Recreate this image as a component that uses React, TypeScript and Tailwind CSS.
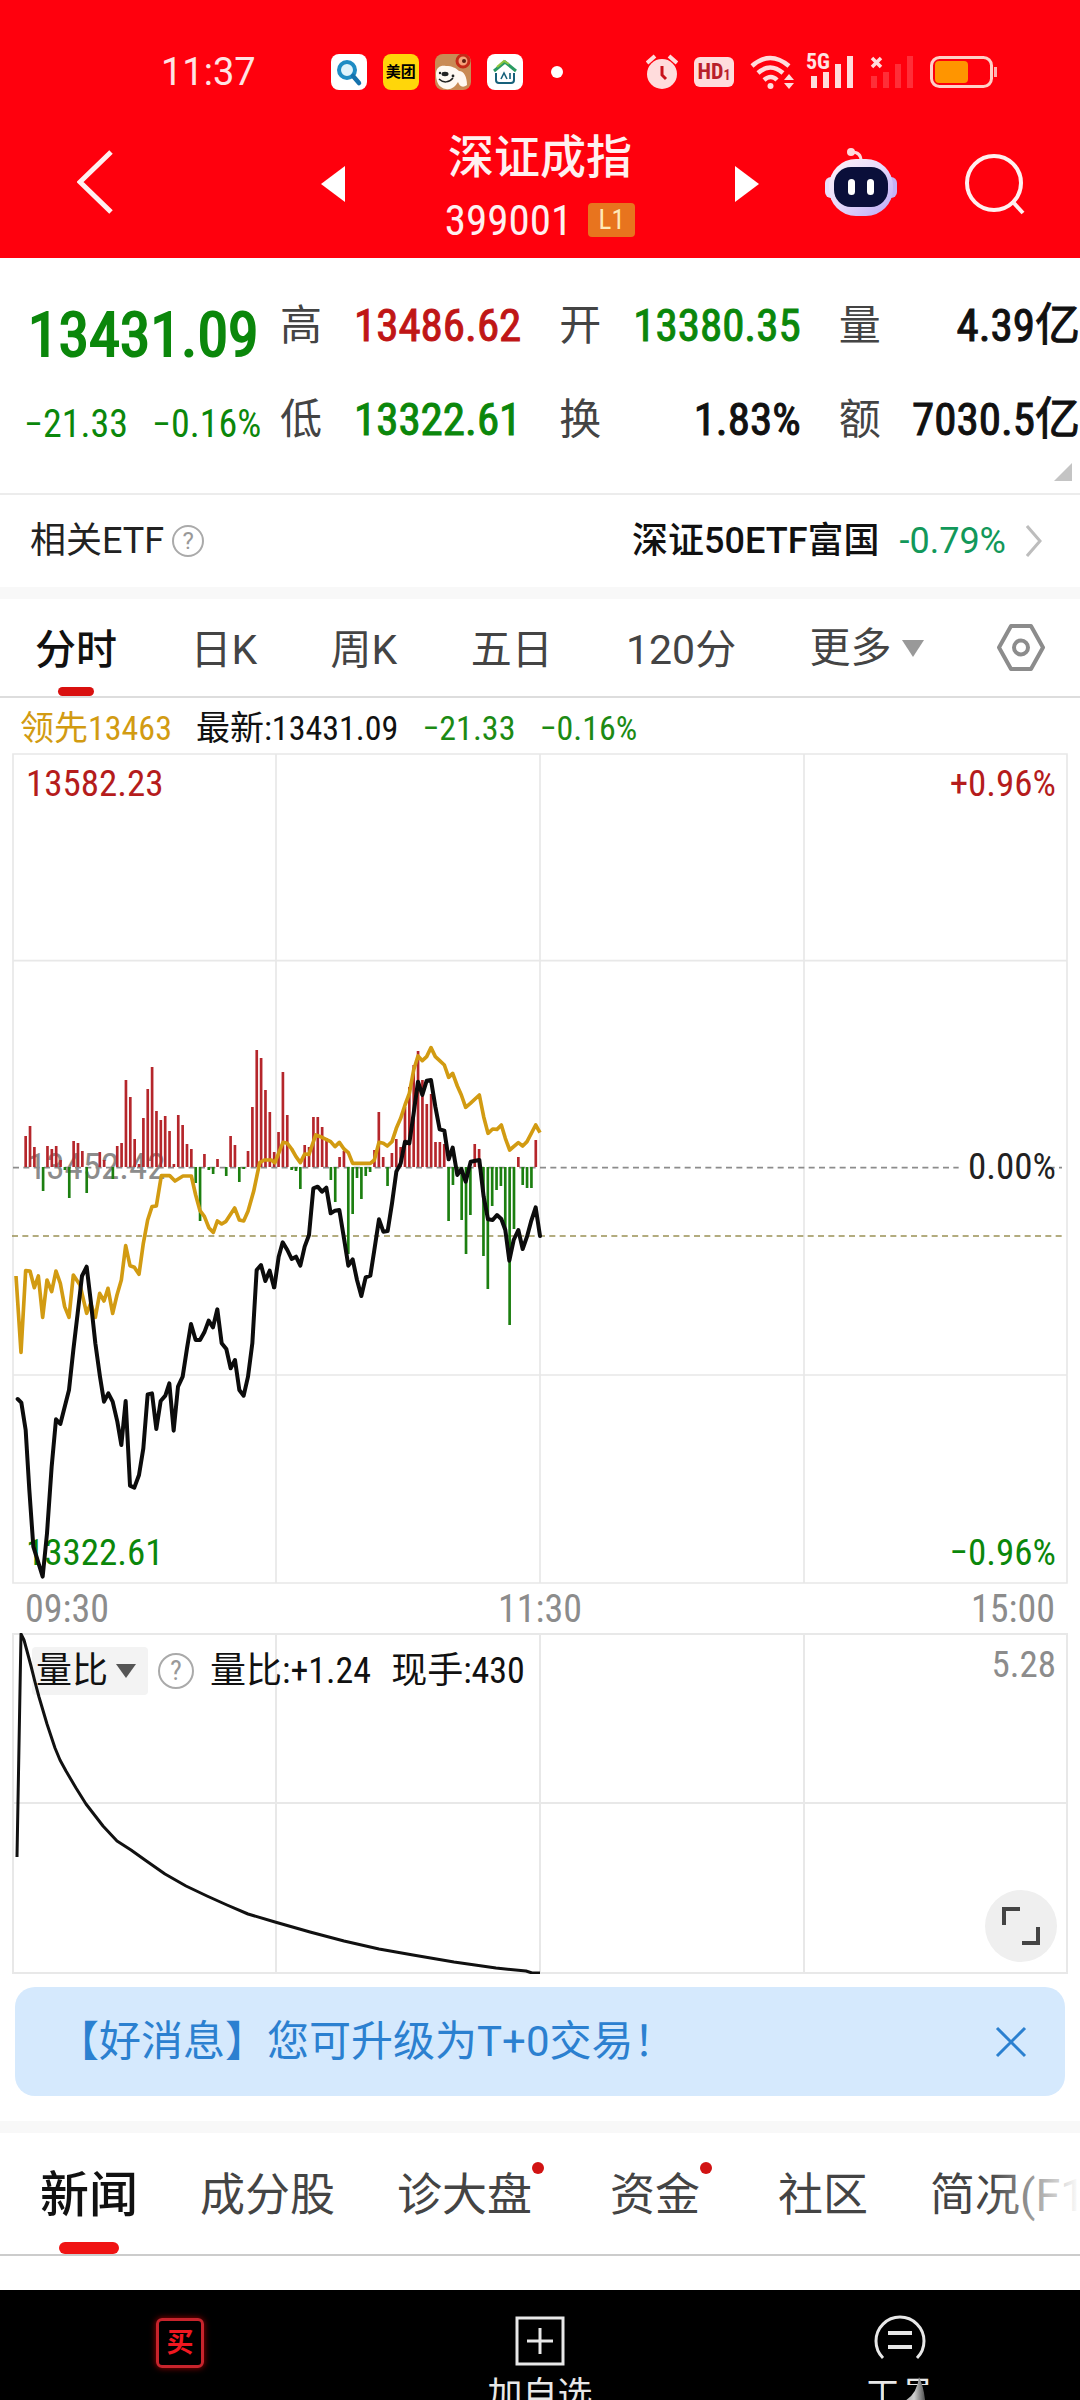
import { useState } from "react";

interface Quote {
    label: string;
    value: string;
    color: string;
}

interface NewsTab {
    label: string;
    dot?: boolean;
}

const quotes: Quote[] = [
    { label: "高", value: "13486.62", color: "text-[#c01616]" },
    { label: "开", value: "13380.35", color: "text-[#0b870b]" },
    { label: "量", value: "4.39亿", color: "text-[#111111]" },
    { label: "低", value: "13322.61", color: "text-[#0b870b]" },
    { label: "换", value: "1.83%", color: "text-[#111111]" },
    { label: "额", value: "7030.5亿", color: "text-[#111111]" },
];

const periods = ["分时", "日K", "周K", "五日", "120分"];

const newsTabs: NewsTab[] = [
    { label: "新闻" },
    { label: "成分股" },
    { label: "诊大盘", dot: true },
    { label: "资金", dot: true },
    { label: "社区" },
    { label: "简况(F10)" },
];

// signed bar heights per minute, starting at minute 6
const strength = [
    31, 41, 20, 0, -24, 21, 18, 21, 7, -3, -31, 26, 24, 16, -26, 0, 0, 15, 7, 0, -12, 21, 24, 87, 70, 28, 3, 49, 78,
    100, 56, 47, 51, 36, 3, 52, 42, 23, 18, -16, -54, 13, -3, -7, 8, 0, -9, 31, 22, -15, -2, 16, 60, 117, 109, 77, 55,
    15, 35, 95, 52, -3, -4, -22, 22, 20, 50, 50, 40, 29, -13, -35, 10, 16, -87, -47, -11, -32, -9, -5, 17, 55, 10, -19,
    14, 28, 20, 60, 80, 102, 116, 87, 63, 73, 25, 25, 23, -54, -18, -5, -53, -87, -48, 23, 18, -89, -122, -39, -23,
    -19, -66, -158, -62, 10, -18, -21, -21, 27,
];

const priceEarly =
    "53,597 64,608 77,690 88,870 100,1040 112,1078 128,1130 141,1000 155,800 168,658 181,672 207,570 220,450 233,340 246,228 260,200 273,310 286,430 300,530 312,605 325,580 338,605 352,665 364,735 377,603 390,857 403,863 417,825 430,745 443,583 456,580 469,687 482,603 496,587 508,550 521,692 534,560 548,530 561,445 573,372 587,420 600,420 613,397 626,362 639,382 652,328 665,430 679,447 692,505 705,480 718,570 731,587 744,530 757,430 770,210 783,195 796,243 809,212 822,262";
const priceLate =
    "13,862 26,770 38,727 52,750 65,777 78,770 91,797 104,740 117,705 130,565 143,560 156,575 169,563 182,640 195,632 208,630 222,715 235,797 248,778 261,840 274,888 287,832 301,827 313,750 327,658 340,695 353,693 366,610 379,515 392,490 405,425 418,430 431,340 444,245 457,285 470,242 483,240 496,320 509,388 523,392 536,478 548,443 562,525 574,507 587,545 602,485 628,480 641,590 654,658 668,660 681,645 694,657 706,690 718,782 731,720 745,690 758,747 771,710 783,665 797,622 810,708";
const leadEarly =
    "48,228 63,457 77,212 90,213 103,263 115,228 128,352 141,240 155,275 168,213 181,250 194,320 207,352 220,225 240,255 260,340 272,310 286,352 299,280 312,303 324,265 338,340 351,285 364,240 377,137 390,197 403,202 417,223 430,130 443,60 456,20 469,18 484,-73 509,-73 525,-57 549,-72 574,-72 587,-15 600,32 613,49 627,84 640,97 652,63 665,72 678,64 704,24 718,60 731,63 744,34 761,-26 779,-112 793,-120 814,-120 827,-110";
const leadLate =
    "13,492 39,427 52,430 65,447 78,470 91,488 104,462 117,463 137,405 156,412 182,425 195,440 208,427 222,447 235,458 248,490 301,490 313,480 327,427 340,430 352,438 366,425 379,385 392,355 405,315 418,280 431,210 444,168 457,182 470,170 483,143 496,170 509,182 523,195 536,232 548,220 562,258 574,285 587,322 601,310 628,285 641,350 654,400 668,387 681,388 694,375 706,415 719,450 745,428 758,438 771,425 797,375 810,398";
const ratio =
    "5,224 9,1 12,7 15,18 19,33 23,49 27,64 35,91 43,115 48,127 54,138 64,155 74,171 91,193 105,208 119,217 133,227 153,241 174,253 195,263 215,272 236,281 263,289 298,299 332,308 367,316 401,322 442,329 484,335 514,338 520,340 528,340";

function StatusBar() {
    return (
        <div className="flex h-[110px] items-end pr-[82px] pb-[18px] pl-[161px] text-[#ffe3e3]">
            <span className="mr-[75px] flex h-10 items-center font-['Roboto',sans-serif] text-[38px] leading-10">11:37</span>
            <div className="flex h-10 items-center gap-4">
                <svg className="size-9" viewBox="0 0 36 36" aria-hidden="true">
                    <rect width="36" height="36" rx="8" fill="#fff" />
                    <circle cx="16" cy="16" r="8" fill="#dff3fb" stroke="#1e8cc4" strokeWidth="4" />
                    <path d="M22 22l6 7" stroke="#1572ad" strokeWidth="4.5" strokeLinecap="round" />
                </svg>
                <span className="flex size-9 items-center justify-center rounded-lg bg-[#ffd60a] text-[15px] leading-5 font-bold text-black">
                    美团
                </span>
                <svg className="size-9" viewBox="0 0 36 36" aria-hidden="true">
                    <rect width="36" height="36" rx="8" fill="#c98a55" />
                    <path d="M1 20C1 13 6 11 11 12c6 0 10 2 13 5 5 0 8 6 8 14-5 4-8 0-9-3-3 5-7 8-12 7C4 34 1 28 1 20z" fill="#fff8f2" />
                    <path d="M4 25c4 4 10 4 14-1" fill="none" stroke="#222" strokeWidth="1.5" />
                    <ellipse cx="10" cy="20" rx="3.5" ry="2.2" fill="#222" />
                    <circle cx="5" cy="19" r="1.2" fill="#222" />
                    <circle cx="18" cy="22" r="1.4" fill="#222" />
                    <circle cx="28" cy="7" r="6" fill="#f6a27a" stroke="#c52a18" strokeWidth="3" />
                    <circle cx="29" cy="7" r="2" fill="#5b1d10" />
                </svg>
                <svg className="size-9" viewBox="0 0 36 36" aria-hidden="true">
                    <rect width="36" height="36" rx="8" fill="#fff" />
                    <path d="M7 17L18 8l11 9" fill="none" stroke="#2a9b62" strokeWidth="3" />
                    <path d="M10 13l7-6 5 3" fill="none" stroke="#8ec63f" strokeWidth="2" />
                    <path d="M9 19v7q0 3 3 3h12q3 0 3-3v-7" fill="none" stroke="#16607a" strokeWidth="2" />
                    <path d="M14 25l3-6 3 6M23 19v6" fill="none" stroke="#16607a" strokeWidth="1.6" />
                </svg>
            </div>
            <span className="mb-[14px] ml-[28px] size-3 rounded-full bg-white" />
            <div className="ml-auto flex h-10 items-center gap-4">
                <svg className="h-9 w-8" viewBox="0 0 32 36" aria-hidden="true">
                    <circle cx="16" cy="20" r="15" fill="#ffdcdc" />
                    <path d="M16 12v9l4 4" fill="none" stroke="#c8101a" strokeWidth="3" />
                    <path d="M1 9l8-7M31 9l-8-7" stroke="#ffdcdc" strokeWidth="4" />
                </svg>
                <span className="flex h-[30px] w-10 items-center justify-center rounded-md bg-[#ffdcdc] text-[22px] leading-6 font-bold text-[#b8202a]">
                    HD<small className="pt-1.5 text-sm leading-4">1</small>
                </span>
                <svg className="h-9 w-11" viewBox="0 0 44 36" aria-hidden="true" fill="none" stroke="#ffdcdc" strokeWidth="4.5">
                    <path d="M2 12q18-16 37 0M8 19q12-11 25 0M14 26q7-6 13 0" />
                    <circle cx="20.500" cy="32" r="3" fill="#ffdcdc" stroke="none" />
                    <path d="M34 26l5-6 5 6zM34 29l5 6 5-6z" fill="#ffdcdc" stroke="none" />
                </svg>
                <div className="relative">
                    <span className="absolute -top-1 -left-1 text-[22px] leading-5 font-bold">5G</span>
                    <svg className="h-8 w-11" viewBox="0 0 44 32" aria-hidden="true" fill="#ffdcdc">
                        <path d="M1 20h6v12H1zM13 16h6v16h-6zM25 8h6v24h-6zM37 0h6v32h-6z" />
                    </svg>
                </div>
                <svg className="h-8 w-11" viewBox="0 0 44 32" aria-hidden="true">
                    <path d="M1 20h6v12H1zM13 16h6v16h-6zM25 8h6v24h-6zM37 0h6v32h-6z" fill="#ff2e38" />
                    <path d="M2 2l9 9M11 2l-9 9" stroke="#ffdcdc" strokeWidth="3.500" />
                </svg>
                <svg className="h-8 w-[68px]" viewBox="0 0 68 32" aria-hidden="true">
                    <rect x="1.500" y="1.500" width="60" height="29" rx="8" fill="none" stroke="#ffd0c8" strokeWidth="3" />
                    <rect x="5" y="5" width="33" height="22" rx="4" fill="#ff9500" />
                    <path d="M65.500 11v10" stroke="#ffb0b0" strokeWidth="3" />
                </svg>
            </div>
        </div>
    );
}

function TitleBar() {
    return (
        <div className="grid h-[148px] grid-cols-[1fr_438px_1fr] items-center px-[54px] text-[#fff0f0]">
            <button type="button" aria-label="返回" className="ml-[23px] justify-self-start pb-1">
                <svg className="h-16 w-9" viewBox="0 0 36 64" fill="none" stroke="currentColor" strokeWidth="5">
                    <path d="M34 2L3 32l31 30" />
                </svg>
            </button>
            <div className="flex items-center justify-between">
                <button type="button" aria-label="上一只">
                    <svg className="h-9 w-6" viewBox="0 0 24 36" fill="#fff">
                        <path d="M24 0v36L0 18z" />
                    </svg>
                </button>
                <div className="flex flex-col items-center pt-1.5">
                    <h1 className="text-[46px] leading-[66px] font-medium">深证成指</h1>
                    <div className="flex items-center gap-4">
                        <span className="text-[43px] leading-[60px]">399001</span>
                        <span className="flex h-[34px] w-[47px] items-center justify-center rounded-sm bg-[#e8741e] text-[27px] leading-8 text-[#ffe9b8]">
                            L1
                        </span>
                    </div>
                </div>
                <button type="button" aria-label="下一只">
                    <svg className="h-9 w-6" viewBox="0 0 24 36" fill="#fff">
                        <path d="M0 0v36l24-18z" />
                    </svg>
                </button>
            </div>
            <div className="flex items-center gap-[68px] justify-self-end">
                <button type="button" aria-label="智能助手" className="pb-1">
                    <svg className="h-[68px] w-[72px]" viewBox="0 0 72 68">
                        <defs>
                            <linearGradient id="shell" x1="0" y1="0" x2="1" y2="1">
                                <stop offset="0" stopColor="#fff3f6" />
                                <stop offset="0.5" stopColor="#e6d9fb" />
                                <stop offset="1" stopColor="#b9a8f5" />
                            </linearGradient>
                        </defs>
                        <path d="M36 13q0-9-9-9" fill="none" stroke="#ffd9dc" strokeWidth="3" />
                        <circle cx="26" cy="4" r="4" fill="#ffd9dc" />
                        <rect x="0" y="29" width="12" height="21" rx="6" fill="#eadffb" />
                        <rect x="60" y="29" width="12" height="21" rx="6" fill="#c4b3f5" />
                        <rect x="4" y="11" width="64" height="57" rx="27" fill="url(#shell)" />
                        <rect x="9" y="19" width="54" height="40" rx="17" fill="#0a0f3a" />
                        <rect x="23" y="31" width="7" height="16" rx="3.500" fill="#fff" />
                        <rect x="42" y="31" width="7" height="16" rx="3.500" fill="#fff" />
                    </svg>
                </button>
                <button type="button" aria-label="搜索">
                    <svg className="size-[61px]" viewBox="0 0 61 61" fill="none" stroke="currentColor" strokeWidth="4">
                        <circle cx="29" cy="29" r="27" />
                        <path d="M47 47l11 12" />
                    </svg>
                </button>
            </div>
        </div>
    );
}

function QuotePanel() {
    return (
        <section className="relative flex h-[237px] border-b-2 border-[#ececec] pt-[35px]">
            <div className="flex w-[280px] shrink-0 flex-col text-[#0b870b]">
                <p className="h-[82px] pl-7 text-[62px] leading-[84px] [-webkit-text-stroke:2px_currentColor]">13431.09</p>
                <p className="flex h-[98px] items-center gap-6 pl-[24px] text-[38px] leading-[98px]">
                    <span>−21.33</span>
                    <span>−0.16%</span>
                </p>
            </div>
            <dl className="grid flex-1 grid-cols-3 content-start gap-x-[38px]">
                {quotes.map((q) => (
                    <div key={q.label} className="flex h-[94px] justify-between leading-[66px] whitespace-nowrap">
                        <dt className="text-[42px] text-[#444444]">{q.label}</dt>
                        <dd className={`text-[45px] [-webkit-text-stroke:1px_currentColor] ${q.color}`}>{q.value}</dd>
                    </div>
                ))}
            </dl>
            <svg className="absolute right-2 bottom-3 size-[18px]" viewBox="0 0 18 18" fill="#c4c4c4" aria-hidden="true">
                <path d="M18 0v18H0z" />
            </svg>
        </section>
    );
}

function HelpIcon({ className = "" }: { className?: string }) {
    return (
        <span
            className={`flex items-center justify-center rounded-full border-2 border-[#aaaaaa] text-[#999999] ${className}`}
        >
            ?
        </span>
    );
}

function EtfRow() {
    return (
        <section className="flex h-[92px] items-center justify-between pr-[38px] pl-[30px] font-['Roboto','Noto_Sans_CJK_SC',sans-serif] text-[36px] leading-[52px]">
            <div className="flex items-center gap-2 text-[#222222]">
                <span>相关ETF</span>
                <HelpIcon className="size-8 text-2xl leading-7" />
            </div>
            <a href="#etf" className="flex items-center gap-5">
                <span className="font-medium text-[#111111]">深证50ETF富国</span>
                <span className="text-[#12985a]">-0.79%</span>
                <svg className="h-8 w-4" viewBox="0 0 16 32" fill="none" stroke="#bdbdbd" strokeWidth="3" aria-hidden="true">
                    <path d="M1 1l13 15L1 31" />
                </svg>
            </a>
        </section>
    );
}

function PeriodTabs() {
    const [active, setActive] = useState("分时");

    return (
        <nav className="flex h-[99px] items-stretch justify-between border-b-2 border-[#dddddd] px-[35px] font-['Roboto','Noto_Sans_CJK_SC',sans-serif] text-[41px] leading-[56px] text-[#444444]">
            {periods.map((p) => (
                <button key={p} type="button" onClick={() => setActive(p)} className="flex flex-col items-center">
                    <span className={`pt-[23px] ${p === active ? "font-medium text-[#111111]" : ""}`}>{p}</span>
                    {p === active && <span className="mt-auto h-[9px] w-9 rounded-full bg-[#d9100f]" />}
                </button>
            ))}
            <button type="button" className="flex items-center gap-2.5">
                更多
                <svg className="h-[18px] w-[22px]" viewBox="0 0 22 18" fill="#999999" aria-hidden="true">
                    <path d="M0 1h22L11 18z" />
                </svg>
            </button>
            <button type="button" aria-label="设置">
                <svg className="h-[47px] w-12" viewBox="0 0 48 47" fill="none" stroke="#8c8c8c" strokeWidth="4" strokeLinejoin="round">
                    <path d="M14 2h20l12 21.500L34 45H14L2 23.500z" />
                    <circle cx="24" cy="23.500" r="7" />
                </svg>
            </button>
        </nav>
    );
}

function PriceChart() {
    return (
        <div className="relative mx-3 text-[37px] leading-[46px]">
            <span className="absolute top-2 left-3.5 text-[#b51c1c]">13582.23</span>
            <span className="absolute top-2 right-3 text-[#b51c1c]">+0.96%</span>
            <span className="absolute top-[47%] left-4 text-[#8c8c8c]">13452.42</span>
            <span className="absolute bottom-2 left-3.5 text-[#0b870b]">13322.61</span>
            <span className="absolute right-3 bottom-2 text-[#0b870b]">−0.96%</span>
            <svg className="relative block w-full" viewBox="0 0 3168 2493" fill="none" aria-label="分时走势">
                <path d="M3 3H3165V2490H3zM3 623H3165M3 1866H3165M792 3V2490M1584 3V2490M2376 3V2490" stroke="#e8e8e8" strokeWidth="5" />
                <path d="M3 1244H2840" stroke="#8c8c8c" strokeWidth="5" strokeDasharray="18 13" />
                <path d="M3110 1244h40" stroke="#8c8c8c" strokeWidth="5" strokeDasharray="18 13" />
                <path d="M0 1449H3150" stroke="#9a9155" strokeWidth="5" strokeDasharray="18 13" />
                {strength.map((h, i) => (
                    <rect
                        key={i}
                        x={37 + i * 13.08}
                        y={h > 0 ? 1242 - h * 3 : 1242}
                        width="8"
                        height={Math.abs(h) * 3}
                        fill={h > 0 ? "#b5262b" : "#1c7f10"}
                    />
                ))}
                <g stroke="#d29b12" strokeWidth="11" strokeLinejoin="round">
                    <polyline transform="translate(-36 1341)" points={leadEarly} />
                    <polyline transform="translate(774 741)" points={leadLate} />
                </g>
                <g stroke="#0c0c0c" strokeWidth="12" strokeLinejoin="round" strokeLinecap="round">
                    <polyline transform="translate(-36 1341)" points={priceEarly} />
                    <polyline transform="translate(774 741)" points={priceLate} />
                </g>
            </svg>
            <span className="absolute top-[47%] right-3 text-[#222222]">0.00%</span>
        </div>
    );
}

function RatioChart() {
    return (
        <div className="relative mx-3">
            <svg className="block w-full" viewBox="0 0 1056 341" fill="none" aria-label="量比走势">
                <path d="M1 1H1055V340H1zM1 170H1055M264 1V340M528 1V340M792 1V340" stroke="#e8e8e8" strokeWidth="2" />
            </svg>
            <div className="absolute inset-x-0 top-2 flex items-center pr-3 pl-5 text-[36px] leading-[48px] text-[#111111]">
                <button type="button" className="flex h-12 items-center gap-2 rounded-sm bg-[#f3f3f3] pr-3 pl-1">
                    量比
                    <svg className="h-[14px] w-5" viewBox="0 0 20 14" fill="#555555" aria-hidden="true">
                        <path d="M0 0h20L10 14z" />
                    </svg>
                </button>
                <HelpIcon className="ml-2.5 size-9 text-[28px] leading-8" />
                <span className="ml-4">量比:+1.24</span>
                <span className="ml-5">现手:430</span>
                <span className="mb-3 ml-auto text-[37px] text-[#8c8c8c]">5.28</span>
            </div>
            <svg className="absolute inset-0 block w-full" viewBox="0 0 1056 341" fill="none" aria-hidden="true">
                <polyline points={ratio} stroke="#111111" strokeWidth="3" strokeLinejoin="round" />
            </svg>
            <button
                type="button"
                aria-label="全屏"
                className="absolute right-[11px] bottom-3 flex size-[72px] items-center justify-center rounded-full bg-[#efefef]"
            >
                <svg className="size-[38px]" viewBox="0 0 38 38" fill="none" stroke="#444444" strokeWidth="4">
                    <path d="M2 18V2h16M36 20v16H20" />
                </svg>
            </button>
        </div>
    );
}

function Banner() {
    const [open, setOpen] = useState(true);
    if (!open) return null;

    return (
        <div className="mx-[15px] mt-[13px] flex h-[109px] items-center justify-between rounded-[20px] bg-[#d5e9fd] pr-[38px] pl-[42px] text-[#2b80d0]">
            <p className="font-['Roboto','Noto_Sans_CJK_SC',sans-serif] text-[42px] leading-[60px]">【好消息】您可升级为T+0交易！</p>
            <button type="button" aria-label="关闭" onClick={() => setOpen(false)}>
                <svg className="size-8" viewBox="0 0 32 32" fill="none" stroke="currentColor" strokeWidth="3">
                    <path d="M2 2l28 28M30 2L2 30" />
                </svg>
            </button>
        </div>
    );
}

function NewsTabs() {
    const [active, setActive] = useState("新闻");

    return (
        <nav className="relative flex h-[123px] items-stretch gap-[62px] overflow-hidden border-b-2 border-[#cccccc] pl-[40px] font-['Roboto','Noto_Sans_CJK_SC',sans-serif] text-[45px] leading-[64px] whitespace-nowrap text-[#444444]">
            {newsTabs.map((t) => (
                <button
                    key={t.label}
                    type="button"
                    onClick={() => setActive(t.label)}
                    className={`relative flex shrink-0 flex-col items-center pt-[31px] ${t.dot ? "pr-4" : ""}`}
                >
                    <span className={t.label === active ? "text-[49px] font-medium text-[#111111]" : ""}>{t.label}</span>
                    {t.dot && <i className="absolute top-[29px] right-1 size-3 rounded-full bg-[#d11313]" />}
                    {t.label === active && <span className="mt-auto h-3 w-[60px] rounded-full bg-[#f01414]" />}
                </button>
            ))}
            <span className="pointer-events-none absolute inset-y-0 right-0 w-[90px] bg-linear-to-r from-white/0 to-white" />
        </nav>
    );
}

function BottomBar() {
    return (
        <footer className="grid h-[110px] grid-cols-3 overflow-hidden bg-black text-[35px] leading-[44px] text-[#e8e8e8]">
            <button type="button" className="flex flex-col items-center pt-7">
                <span className="flex h-[50px] w-12 items-center justify-center rounded-md border-3 border-[#c8242c] text-[27px] leading-8 font-bold text-[#f01820] shadow-[0_0_6px_#a00000]">
                    买
                </span>
            </button>
            <button type="button" className="flex flex-col items-center gap-2 pt-[26px]">
                <svg className="size-[50px] shrink-0" viewBox="0 0 50 50" fill="none" stroke="currentColor" strokeWidth="3" aria-hidden="true">
                    <path d="M2 2h46v46H2zM25 12v26M12 25h26" />
                </svg>
                <span>加自选</span>
            </button>
            <button type="button" className="relative flex flex-col items-center gap-2 pt-6">
                <svg className="size-[52px] shrink-0" viewBox="0 0 52 52" fill="none" stroke="currentColor" strokeWidth="3" aria-hidden="true">
                    <path d="M9 44A24 24 0 1 1 43 44" />
                    <path d="M14 19h24M14 33h24" strokeWidth="4" />
                </svg>
                <span>工具</span>
                <svg className="absolute right-0 bottom-0 h-[41px] w-[198px]" viewBox="0 0 198 41" aria-hidden="true">
                    <defs>
                        <linearGradient id="glare" x1="0" y1="0" x2="1" y2="0">
                            <stop offset="0" stopColor="#555" />
                            <stop offset="0.7" stopColor="#d0d0d0" />
                            <stop offset="1" stopColor="#444" />
                        </linearGradient>
                    </defs>
                    <path d="M2 8h196v33H2z" fill="#000" />
                    <path d="M4 29Q34 27 37 0Q44 14 44 41H30Q20 32 4 29z" fill="url(#glare)" />
                </svg>
            </button>
        </footer>
    );
}

export default function App() {
    return (
        <main className="w-full overflow-hidden bg-white font-['Roboto_Condensed','Roboto','Noto_Sans_CJK_SC',sans-serif]">
            <header className="bg-[#ff000d]">
                <StatusBar />
                <TitleBar />
            </header>
            <QuotePanel />
            <EtfRow />
            <div className="h-3 bg-[#f8f8f8]" />
            <PeriodTabs />
            <p className="flex h-[55px] items-center gap-6 pt-1 pl-5 text-[34px] leading-[50px]">
                <span className="text-[#d29b12]">领先13463</span>
                <span className="text-[#111111]">最新:13431.09</span>
                <span className="text-[#1c8a14]">−21.33</span>
                <span className="text-[#1c8a14]">−0.16%</span>
            </p>
            <PriceChart />
            <div className="flex h-[49px] items-center justify-between px-[25px] text-[38px] leading-[48px] text-[#8c8c8c]">
                <span>09:30</span>
                <span>11:30</span>
                <span>15:00</span>
            </div>
            <RatioChart />
            <Banner />
            <div className="mt-[25px] h-3 bg-[#f8f8f8]" />
            <NewsTabs />
            <div className="h-[34px]" />
            <BottomBar />
        </main>
    );
}
